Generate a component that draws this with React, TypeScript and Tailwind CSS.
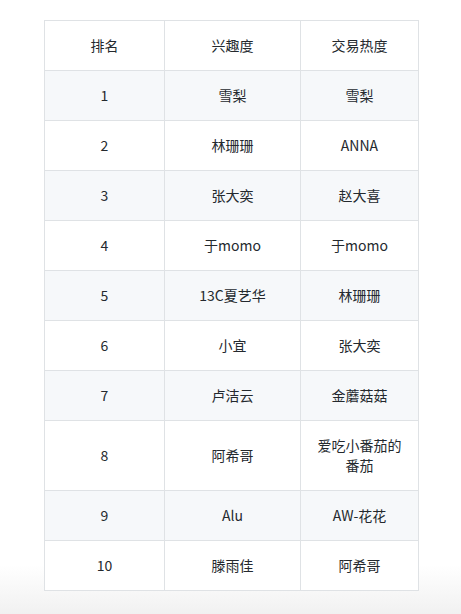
const rows: [string, string, string][] = [
  ["1", "雪梨", "雪梨"],
  ["2", "林珊珊", "ANNA"],
  ["3", "张大奕", "赵大喜"],
  ["4", "于momo", "于momo"],
  ["5", "13C夏艺华", "林珊珊"],
  ["6", "小宜", "张大奕"],
  ["7", "卢洁云", "金蘑菇菇"],
  ["8", "阿希哥", "爱吃小番茄的番茄"],
  ["9", "Alu", "AW-花花"],
  ["10", "滕雨佳", "阿希哥"],
];

const cell = "border border-[#dfe2e5] px-[13px] pt-[14px] pb-[15px] text-center font-normal";

export default function App() {
  return (
    <div
      className="h-[614px] bg-gradient-to-b from-white from-[92%] to-[#f1f1f1] pt-[20px] text-[14px] leading-[20px] text-[#24292e]"
      style={{ fontFamily: '"Noto Sans CJK SC", "Liberation Sans", sans-serif' }}
    >
      <table className="ml-[44px] border-collapse bg-white">
        <thead>
          <tr>
            <th className={`${cell} w-[120px]`}>排名</th>
            <th className={`${cell} w-[136px]`}>兴趣度</th>
            <th className={`${cell} w-[118px]`}>交易热度</th>
          </tr>
        </thead>
        <tbody>
          {rows.map((r, i) => (
            <tr key={r[0]} className={i % 2 === 0 ? "bg-[#f6f8fa]" : "bg-white"}>
              <td className={cell}>{r[0]}</td>
              <td className={cell}>{r[1]}</td>
              <td className={cell}>{r[2]}</td>
            </tr>
          ))}
        </tbody>
      </table>
    </div>
  );
}
